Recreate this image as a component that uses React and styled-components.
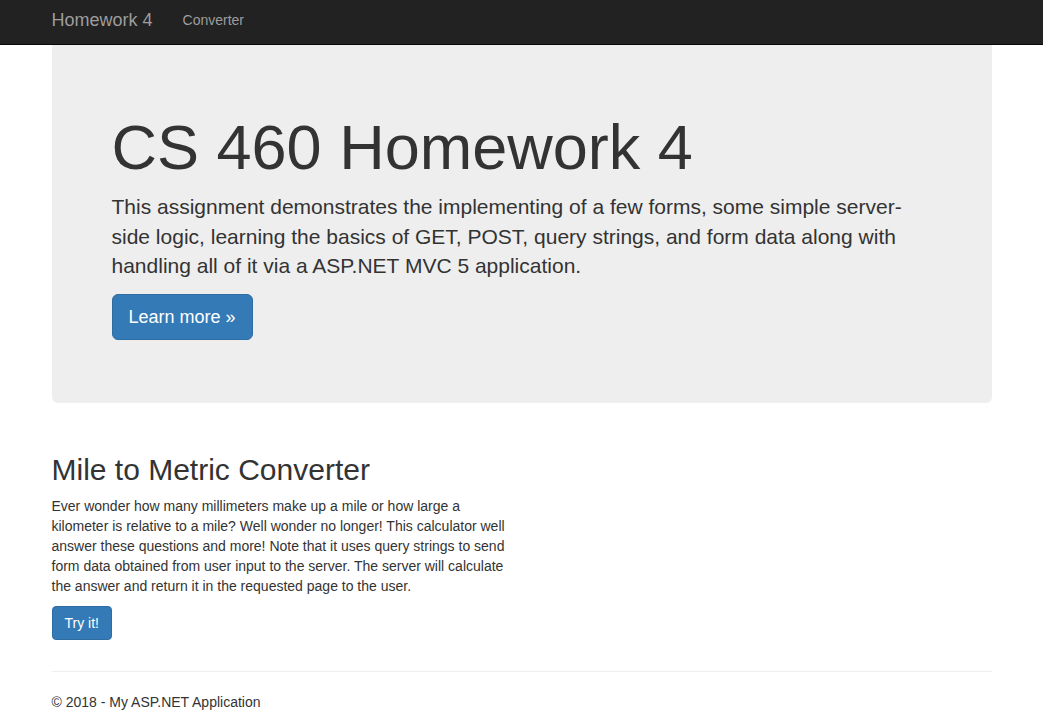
// Homework 4 landing page: navbar, jumbotron, converter blurb and footer

import React from 'react';
import styled, { createGlobalStyle } from 'styled-components';

const App = () => {
    return (
        <>
            <GlobalStyle />
            <Navbar>
                <NavInner>
                    <Brand href="#">Homework 4</Brand>
                    <NavLink href="#">Converter</NavLink>
                </NavInner>
            </Navbar>
            <Container>
                <Jumbotron>
                    <h1>CS 460 Homework 4</h1>
                    <p>
                        This assignment demonstrates the implementing of a few forms, some simple server-side logic,
                        learning the basics of GET, POST, query strings, and form data along with handling all of it
                        via a ASP.NET MVC 5 application.
                    </p>
                    <ButtonRow>
                        <Button href="#" $large>Learn more &raquo;</Button>
                    </ButtonRow>
                </Jumbotron>
                <Column>
                    <h2>Mile to Metric Converter</h2>
                    <p>
                        Ever wonder how many millimeters make up a mile or how large a kilometer is relative to a
                        mile? Well wonder no longer! This calculator well answer these questions and more! Note that
                        it uses query strings to send form data obtained from user input to the server. The server
                        will calculate the answer and return it in the requested page to the user.
                    </p>
                    <p>
                        <Button href="#">Try it!</Button>
                    </p>
                </Column>
                <Divider />
                <Footer>
                    <p>&copy; 2018 - My ASP.NET Application</p>
                </Footer>
            </Container>
        </>
    );
};

// Colours
const textColor = '#333333';
const navBackground = '#222222';
const navBorder = '#080808';
const navText = '#9d9d9d';
const jumboBackground = '#eeeeee';
const primary = '#337ab7';
const primaryBorder = '#2e6da4';

const GlobalStyle = createGlobalStyle`
    * {
        box-sizing: border-box;
    }
    body {
        margin: 0;
        font-family: "Liberation Sans", Arial, Helvetica, sans-serif;
        font-size: 14px;
        line-height: 20px;
        color: ${textColor};
        background: #fff;
    }
`;

const Navbar = styled.nav`
    height: 45px;
    background: ${navBackground};
    border-bottom: 1px solid ${navBorder};
`;

const NavInner = styled.div`
    width: 940px;
    margin: 0 auto;
    display: flex;
    align-items: flex-start;
    padding-top: 10px;
`;

const Brand = styled.a`
    font-size: 18px;
    line-height: 20px;
    color: ${navText};
    text-decoration: none;
    padding-right: 15px;
`;

const NavLink = styled.a`
    font-size: 14px;
    line-height: 20px;
    color: ${navText};
    text-decoration: none;
    padding: 0 15px;
`;

const Container = styled.div`
    width: 940px;
    margin: 0 auto;
`;

const Jumbotron = styled.div`
    background: ${jumboBackground};
    border-radius: 0 0 6px 6px;
    padding: 48px 60px 49px;
    margin-bottom: 30px;
    h1 {
        font-size: 63px;
        line-height: 1.1;
        font-weight: normal;
        margin: 20px 0 10px;
    }
    p {
        font-size: 21px;
        line-height: 1.4;
        margin: 0 0 14px;
    }
`;

const ButtonRow = styled.p`
    margin: 0 0 15px;
`;

const Button = styled.a`
    display: inline-block;
    background: ${primary};
    border: 1px solid ${primaryBorder};
    color: #fff;
    text-decoration: none;
    font-size: ${(p) => (p.$large ? '18px' : '14px')};
    line-height: ${(p) => (p.$large ? '24px' : '20px')};
    padding: ${(p) => (p.$large ? '10px 16px' : '6px 12px')};
    border-radius: ${(p) => (p.$large ? '6px' : '4px')};
    vertical-align: middle;
`;

const Column = styled.div`
    display: flow-root;
    width: 455px;
    h2 {
        font-size: 30px;
        line-height: 33px;
        font-weight: normal;
        margin: 20px 0 10px;
    }
    p {
        margin: 0 0 10px;
    }
`;

const Divider = styled.hr`
    border: 0;
    border-top: 1px solid #eeeeee;
    margin: 21px 0 20px;
`;

const Footer = styled.footer`
    p {
        margin: 0 0 10px;
    }
`;

export default App;
